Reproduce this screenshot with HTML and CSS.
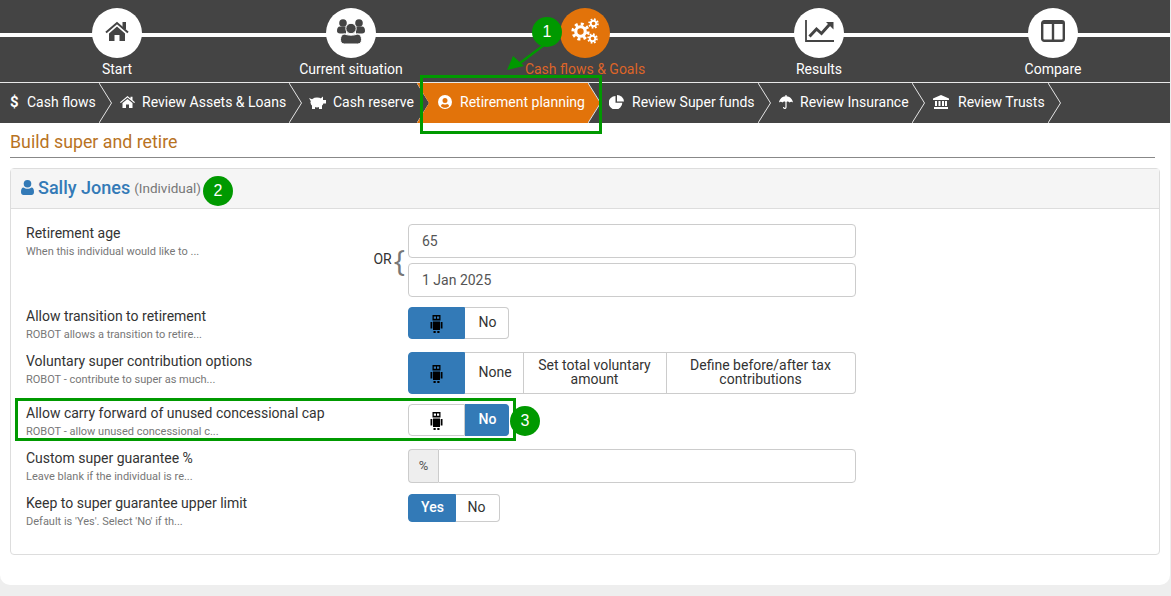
FILE: index.html
```html
<!DOCTYPE html>
<html lang="en">
<head>
    <meta charset="UTF-8">
    <meta name="viewport" content="width=device-width, initial-scale=1.0">
    <title>Build super and retire</title>
    <link rel="stylesheet" href="styles.css">
</head>
<body>
    <svg class="defs" width="0" height="0" aria-hidden="true">
        <symbol id="i-home" viewBox="0 0 24 20">
            <path d="M1 11.500 12 2l11 9.500" fill="none" stroke="currentColor" stroke-width="2"/>
            <rect x="17.500" y="1" width="3.500" height="7" fill="currentColor"/>
            <path d="M4 12.500 12 5.600l8 6.900V20h-5.500v-6h-5v6H4z" fill="currentColor"/>
        </symbol>
        <symbol id="i-home-small" viewBox="0 0 15 12">
            <path d="M7.500 0 10.500 2.400V.8h2v3.300L15 6.200l-.8.9-6.700-5.500L.8 7.100 0 6.200z" fill="currentColor"/>
            <path d="M2.500 7 7.500 2.900 12.500 7v5H9V8.500H6V12H2.500z" fill="currentColor"/>
        </symbol>
        <symbol id="i-users" viewBox="0 0 28 25">
            <circle cx="6" cy="4" r="3.800" fill="currentColor"/>
            <circle cx="22" cy="4" r="3.800" fill="currentColor"/>
            <path d="M0 12c0-3 1-4.500 3-4.500h6v7H3c-2 0-3-1-3-2.500zM28 12c0-3-1-4.500-3-4.500h-6v7h6c2 0 3-1 3-2.500z" fill="currentColor"/>
            <circle cx="14" cy="9.500" r="5.200" fill="currentColor" stroke="#fff" stroke-width="1"/>
            <path d="M8 15c2 1.500 10 1.500 12 0 3 0 4.500 2 4.500 5.500 0 3-1.500 4.500-4 4.500h-13c-2.500 0-4-1.500-4-4.500C3.500 17 5 15 8 15z" fill="currentColor" stroke="#fff" stroke-width="1"/>
        </symbol>
        <symbol id="i-gear" viewBox="-12 -12 24 24">
            <circle r="6" fill="none" stroke="currentColor" stroke-width="4"/>
            <circle r="9.500" fill="none" stroke="currentColor" stroke-width="4" stroke-dasharray="3.700 3.760"/>
        </symbol>
        <symbol id="i-chart" viewBox="0 0 29 22">
            <path d="M1 0v21h28" fill="none" stroke="currentColor" stroke-width="1.800"/>
            <path d="M4.500 16.500 11.500 9l5 4.500 8-9" fill="none" stroke="currentColor" stroke-width="3"/>
            <path d="M21 2h7.500v7.500z" fill="currentColor"/>
        </symbol>
        <symbol id="i-columns" viewBox="0 0 24 22">
            <rect x="1.200" y="1.200" width="21.600" height="19.600" rx="2" fill="none" stroke="currentColor" stroke-width="2.400"/>
            <path d="M12 1v20" stroke="currentColor" stroke-width="2.400"/>
            <path d="M1 1h22v3H1z" fill="currentColor"/>
        </symbol>
        <symbol id="i-piggy" viewBox="0 0 17 13">
            <ellipse cx="8" cy="6.500" rx="6.500" ry="5" fill="currentColor"/>
            <path d="M0 2l3.500 1.500-1.500 2zM11 3l3-2.500v3.500h3v3.500h-3zM3 9h3v4H3zM10 9h3v4h-3z" fill="currentColor"/>
        </symbol>
        <symbol id="i-user-circle" viewBox="0 0 14 14">
            <path fill-rule="evenodd" d="M7 0a7 7 0 1 1 0 14A7 7 0 0 1 7 0zm0 3a2.500 2.500 0 1 0 0 5 2.500 2.500 0 0 0 0-5zM2.800 11c1 1.200 2.500 1.800 4.200 1.800s3.200-.6 4.200-1.800C10.800 9.700 9.800 9 9 9c-.6.400-1.200.6-2 .6S5.600 9.400 5 9c-.8 0-1.800.7-2.200 2z" fill="currentColor"/>
        </symbol>
        <symbol id="i-pie" viewBox="0 0 15 14">
            <path d="M6.500 1v6.800h6.800A6.800 6.800 0 1 1 6.500 1z" fill="currentColor"/>
            <path d="M8 0a7 7 0 0 1 7 6.500H8z" fill="currentColor"/>
        </symbol>
        <symbol id="i-umbrella" viewBox="0 0 14 15">
            <path d="M0 7.500C.5 3.500 3.500 1.500 6.400 1.200V0h1.200v1.200C10.500 1.500 13.500 3.500 14 7.500c-1-1-2.500-1-3.500 0-.8-1-2-1.200-2.900-.6V12c0 2.800-3.600 2.800-3.600 0h1.200c0 1.200 1.200 1.200 1.200 0V6.900c-.9-.6-2.100-.4-2.900.6C2.500 6.500 1 6.500 0 7.500z" fill="currentColor"/>
        </symbol>
        <symbol id="i-bank" viewBox="0 0 16 14">
            <path d="M8 0l8 3.500V5H0V3.500zM1 12h14v2H1zM2 6h2v5H2zM5.500 6h2v5h-2zM9 6h2v5H9zM12 6h2v5h-2z" fill="currentColor"/>
        </symbol>
        <symbol id="i-robot" viewBox="0 0 13 18">
            <path fill-rule="evenodd" d="M2.500 0h8v5.500h-8zM3.800 1.500v2.200h2.200V1.500zM7 1.500v2.200h2.200V1.500z" fill="currentColor"/>
            <path d="M3 6.500h7V15H3zM.5 7h1.800v6.500H.5zM10.700 7h1.800v6.500h-1.800zM3.500 16h2.200v2H3.500zM7.300 16h2.200v2H7.300z" fill="currentColor"/>
        </symbol>
        <symbol id="i-chev" viewBox="0 0 13 40">
            <path d="M0 0 12.500 20 0 40" fill="none" stroke="currentColor" stroke-width="1"/>
        </symbol>
    </svg>

    <div class="page">
        <header class="top">
            <nav class="steps">
                <a class="step">
                    <span class="step-icon"><svg width="24" height="20"><use href="#i-home"/></svg></span>
                    <span class="step-label">Start</span>
                </a>
                <a class="step">
                    <span class="step-icon"><svg width="28" height="25"><use href="#i-users"/></svg></span>
                    <span class="step-label">Current situation</span>
                </a>
                <a class="step active">
                    <span class="step-icon">
                        <svg class="cogs" width="28" height="26" viewBox="0 0 28 26">
                            <use href="#i-gear" x="0" y="4" width="19" height="19"/>
                            <use href="#i-gear" x="17" y="0" width="11" height="11"/>
                            <use href="#i-gear" x="16" y="15" width="11" height="11"/>
                        </svg>
                    </span>
                    <span class="step-label">Cash flows &amp; Goals</span>
                </a>
                <a class="step">
                    <span class="step-icon"><svg width="29" height="22"><use href="#i-chart"/></svg></span>
                    <span class="step-label">Results</span>
                </a>
                <a class="step">
                    <span class="step-icon"><svg width="24" height="22"><use href="#i-columns"/></svg></span>
                    <span class="step-label">Compare</span>
                </a>
            </nav>
            <nav class="crumbs">
                <a class="crumb crumb-cash"><span class="crumb-dollar">$</span><span>Cash flows</span><svg class="chev" width="13" height="40"><use href="#i-chev"/></svg></a>
                <a class="crumb crumb-assets"><svg width="15" height="12"><use href="#i-home-small"/></svg><span>Review Assets &amp; Loans</span><svg class="chev" width="13" height="40"><use href="#i-chev"/></svg></a>
                <a class="crumb crumb-reserve"><svg width="17" height="13"><use href="#i-piggy"/></svg><span>Cash reserve</span><svg class="chev" width="13" height="40"><use href="#i-chev"/></svg></a>
                <a class="crumb crumb-retire active"><svg width="14" height="14"><use href="#i-user-circle"/></svg><span>Retirement planning</span><svg class="chev" width="13" height="40"><use href="#i-chev"/></svg></a>
                <a class="crumb crumb-super"><svg width="15" height="14"><use href="#i-pie"/></svg><span>Review Super funds</span><svg class="chev" width="13" height="40"><use href="#i-chev"/></svg></a>
                <a class="crumb crumb-insurance"><svg width="14" height="15"><use href="#i-umbrella"/></svg><span>Review Insurance</span><svg class="chev" width="13" height="40"><use href="#i-chev"/></svg></a>
                <a class="crumb crumb-trusts"><svg width="16" height="14"><use href="#i-bank"/></svg><span>Review Trusts</span><svg class="chev" width="13" height="40"><use href="#i-chev"/></svg></a>
            </nav>
        </header>

        <main class="content">
            <h1 class="page-title">Build super and retire</h1>
            <section class="panel">
                <div class="panel-head">
                    <svg class="person" width="13" height="15" viewBox="0 0 13 15"><circle cx="6.500" cy="3.800" r="3.800" fill="currentColor"/><path d="M2.500 7.500c1 .8 2.500 1.300 4 1.300s3-.5 4-1.300c1.600 0 2.500 1.500 2.500 4.500 0 2-1 3-2.500 3h-8C1 15 0 14 0 12c0-3 .9-4.500 2.500-4.500z" fill="currentColor"/></svg>
                    <span class="person-name">Sally Jones</span>
                    <small class="person-type">(Individual)</small>
                </div>
                <div class="panel-body">
                    <div class="row">
                        <div class="row-label">
                            <div class="label-text">
                                <div class="label">Retirement age</div>
                                <div class="hint">When this individual would like to ...</div>
                            </div>
                            <div class="or"><span>OR</span><span class="brace">{</span></div>
                        </div>
                        <div class="stack">
                            <input class="field" type="text" value="65">
                            <input class="field" type="text" value="1 Jan 2025">
                        </div>
                    </div>
                    <div class="row">
                        <div class="row-label">
                            <div class="label-text">
                                <div class="label">Allow transition to retirement</div>
                                <div class="hint">ROBOT allows a transition to retire...</div>
                            </div>
                        </div>
                        <div class="toggle">
                            <button class="seg seg-robot on"><svg width="13" height="18"><use href="#i-robot"/></svg></button>
                            <button class="seg seg-no">No</button>
                        </div>
                    </div>
                    <div class="row">
                        <div class="row-label">
                            <div class="label-text">
                                <div class="label">Voluntary super contribution options</div>
                                <div class="hint">ROBOT - contribute to super as much...</div>
                            </div>
                        </div>
                        <div class="toggle wide">
                            <button class="seg seg-robot on"><svg width="13" height="18"><use href="#i-robot"/></svg></button>
                            <button class="seg seg-none">None</button>
                            <button class="seg seg-total">Set total voluntary amount</button>
                            <button class="seg seg-define">Define before/after tax contributions</button>
                        </div>
                    </div>
                    <div class="row">
                        <div class="row-label">
                            <div class="label-text">
                                <div class="label">Allow carry forward of unused concessional cap</div>
                                <div class="hint">ROBOT - allow unused concessional c...</div>
                            </div>
                        </div>
                        <div class="toggle">
                            <button class="seg seg-robot"><svg width="13" height="18"><use href="#i-robot"/></svg></button>
                            <button class="seg seg-no on">No</button>
                        </div>
                    </div>
                    <div class="row">
                        <div class="row-label">
                            <div class="label-text">
                                <div class="label">Custom super guarantee %</div>
                                <div class="hint">Leave blank if the individual is re...</div>
                            </div>
                        </div>
                        <div class="input-group">
                            <span class="addon">%</span>
                            <input class="field joined" type="text">
                        </div>
                    </div>
                    <div class="row">
                        <div class="row-label">
                            <div class="label-text">
                                <div class="label">Keep to super guarantee upper limit</div>
                                <div class="hint">Default is 'Yes'. Select 'No' if th...</div>
                            </div>
                        </div>
                        <div class="toggle short">
                            <button class="seg seg-yes on">Yes</button>
                            <button class="seg seg-no2">No</button>
                        </div>
                    </div>
                </div>
            </section>
        </main>

        <!-- green callouts drawn over the screen -->
        <svg class="arrow" width="50" height="40" viewBox="0 0 50 40">
            <path d="M44 6 20 24" stroke="#090" stroke-width="2.500"/>
            <path d="M7 31 13 17 24 27z" fill="#090"/>
        </svg>
        <div class="callout-box box-crumb"></div>
        <div class="callout-box box-row"></div>
        <div class="badge badge-1">1</div>
        <div class="badge badge-2">2</div>
        <div class="badge badge-3">3</div>
    </div>
</body>
</html>
```

FILE: styles.css
```css
:root {
    --dark: #444444;
    --orange: #e2730a;
    --blue: #337ab7;
    --green: #009900;
    --border: #cccccc;
}

* {
    box-sizing: border-box;
}

body {
    margin: 0;
    background: #eeeeee;
    font-family: Roboto, Arial, sans-serif;
    font-size: 14px;
    color: #333;
}

.defs {
    position: absolute;
}

.page {
    position: relative;
    width: 1170px;
    height: 596px;
}

.top {
    background: var(--dark);
    color: #fff;
}

/* top step bar */
.steps {
    display: grid;
    grid-template-columns: repeat(5, 234px);
    height: 82px;
    padding-top: 8px;
    background: linear-gradient(#fff, #fff) 0 33px / 100% 4px no-repeat;
}

.step {
    display: flex;
    flex-direction: column;
    align-items: center;
}

.step-icon {
    width: 50px;
    height: 50px;
    padding-bottom: 4px;
    border-radius: 50%;
    background: #fff;
    color: var(--dark);
    display: flex;
    align-items: center;
    justify-content: center;
}

.step-label {
    margin-top: 3px;
    line-height: 16px;
    font-size: 14px;
}

.step.active .step-icon {
    background: var(--orange);
    color: #fff;
}

.step.active .step-label {
    color: #dd6428;
}

/* breadcrumb arrows */
.crumbs {
    display: flex;
    height: 41px;
    border-top: 1px solid #e8e8e8;
}

.crumb {
    position: relative;
    display: flex;
    align-items: center;
    flex: none;
    height: 40px;
    padding-left: 8px;
    color: #fff;
}

.crumb > span:not(.crumb-dollar) {
    padding-bottom: 2px;
}

.crumb > svg:first-child {
    margin-right: 7px;
    margin-bottom: 2px;
}

.crumb-cash { width: 112px; padding-left: 10px; }
.crumb-assets { width: 190px; }
.crumb-reserve { width: 128px; padding-left: 7px; }
.crumb-retire { width: 184px; margin-left: -13px; padding-left: 21px; }
.crumb-super { width: 170px; }
.crumb-insurance { width: 154px; }
.crumb-trusts { width: 136px; }

.crumb-retire > svg:first-child,
.crumb-super > svg:first-child {
    margin-right: 8px;
}

.crumb-trusts > svg:first-child {
    margin-right: 9px;
}

.crumb-dollar {
    width: 17px;
    padding-bottom: 2px;
    font-weight: 700;
    font-size: 15px;
}

.crumb .chev {
    margin-left: auto;
    color: #e4e4e4;
    flex: none;
}

.crumb.active::before {
    content: "";
    position: absolute;
    inset: 0 1px 0 0;
    background: var(--orange);
    clip-path: polygon(0 0, calc(100% - 12px) 0, 100% 50%, calc(100% - 12px) 100%, 0 100%, 12px 50%);
}

.crumb.active > * {
    position: relative;
}

/* main content */
.content {
    background: #fff;
    padding: 9px 10px 30px;
    border-radius: 0 0 10px 10px;
}

.page-title {
    margin: 0 5px 10px 0;
    padding-bottom: 5px;
    border-bottom: 1px solid #888;
    font-size: 17.800px;
    line-height: 20px;
    font-weight: 400;
    color: #b8731f;
}

.panel {
    border: 1px solid #ddd;
    border-radius: 4px;
}

.panel-head {
    display: flex;
    align-items: center;
    height: 40px;
    padding: 0 0 3px 10px;
    background: #f5f5f5;
    border-bottom: 1px solid #ddd;
    color: var(--blue);
}

.person {
    margin-right: 4px;
}

.person-name {
    font-size: 18px;
    font-weight: 500;
}

.person-type {
    margin-left: 4px;
    padding-top: 2px;
    font-size: 13.500px;
    color: #777;
}

.panel-body {
    padding: 15px 15px 5px;
}

.row {
    display: grid;
    grid-template-columns: 382px 448px;
    align-items: start;
    min-height: 35px;
    margin-bottom: 10px;
}

.row:last-child {
    margin-bottom: 20px;
}

.row-label {
    display: flex;
    justify-content: space-between;
    height: 100%;
}

.label {
    line-height: 18px;
}

.hint {
    height: 17px;
    font-size: 11px;
    line-height: 20px;
    color: #777;
}

.or {
    display: flex;
    align-items: center;
    padding-right: 3px;
    margin-top: -3px;
    gap: 2px;
    font-size: 14px;
}

.brace {
    margin-top: 0;
    font-family: "Open Sans", sans-serif;
    font-weight: 400;
    font-size: 30px;
    color: #777;
}

.stack {
    display: flex;
    flex-direction: column;
    gap: 5px;
}

.field {
    display: block;
    width: 100%;
    height: 34px;
    padding: 0 13px;
    border: 1px solid var(--border);
    border-radius: 4px;
    font: 14px Roboto, Arial, sans-serif;
    color: #555;
    background: #fff;
}

.toggle {
    display: flex;
    height: 32px;
}

.toggle.wide {
    height: 42px;
}

.toggle.short {
    height: 28px;
}

.seg {
    margin: 0;
    padding: 0 5px 2px 7px;
    border: 1px solid var(--border);
    border-left-width: 0;
    background: #fff;
    color: #333;
    font: 14px/14px Roboto, Arial, sans-serif;
}

.seg:first-child {
    border-left-width: 1px;
    border-radius: 4px 0 0 4px;
}

.seg:last-child {
    border-radius: 0 4px 4px 0;
}

.seg.on {
    background: var(--blue);
    border-color: var(--blue);
    color: #fff;
    font-weight: 500;
}

.seg svg {
    display: block;
    margin: 1px auto 0;
    color: #000;
}

.seg-robot { width: 57px; padding: 0; }
.seg-no { width: 44px; }
.seg-none { width: 59px; }
.seg-total { width: 143px; padding: 0 6px 2px 5px; }
.seg-define { width: 189px; padding: 0 20px 2px 19px; }
.seg-yes { width: 48px; padding-left: 6px; }
.seg-no2 { width: 44px; padding: 0 7px 2px 5px; }

.input-group {
    display: flex;
}

.addon {
    flex: none;
    width: 30px;
    height: 34px;
    line-height: 32px;
    text-align: center;
    font-size: 13px;
    color: #555;
    background: #eee;
    border: 1px solid var(--border);
    border-right: 0;
    border-radius: 4px 0 0 4px;
}

.field.joined {
    border-radius: 0 4px 4px 0;
}

/* callouts */
.callout-box {
    position: absolute;
    border: 3px solid var(--green);
}

.box-crumb {
    left: 420px;
    top: 75px;
    width: 182px;
    height: 59px;
}

.box-row {
    left: 15px;
    top: 398px;
    width: 501px;
    height: 43px;
}

.badge {
    position: absolute;
    width: 30px;
    height: 30px;
    border-radius: 50%;
    background: var(--green);
    color: #fff;
    font: 16px/30px "Liberation Sans", Arial, sans-serif;
    text-align: center;
}

.badge-1 { left: 532px; top: 17px; }
.badge-2 { left: 203px; top: 176px; }
.badge-3 { left: 510px; top: 406px; }

.arrow {
    position: absolute;
    left: 500px;
    top: 39px;
}
```
